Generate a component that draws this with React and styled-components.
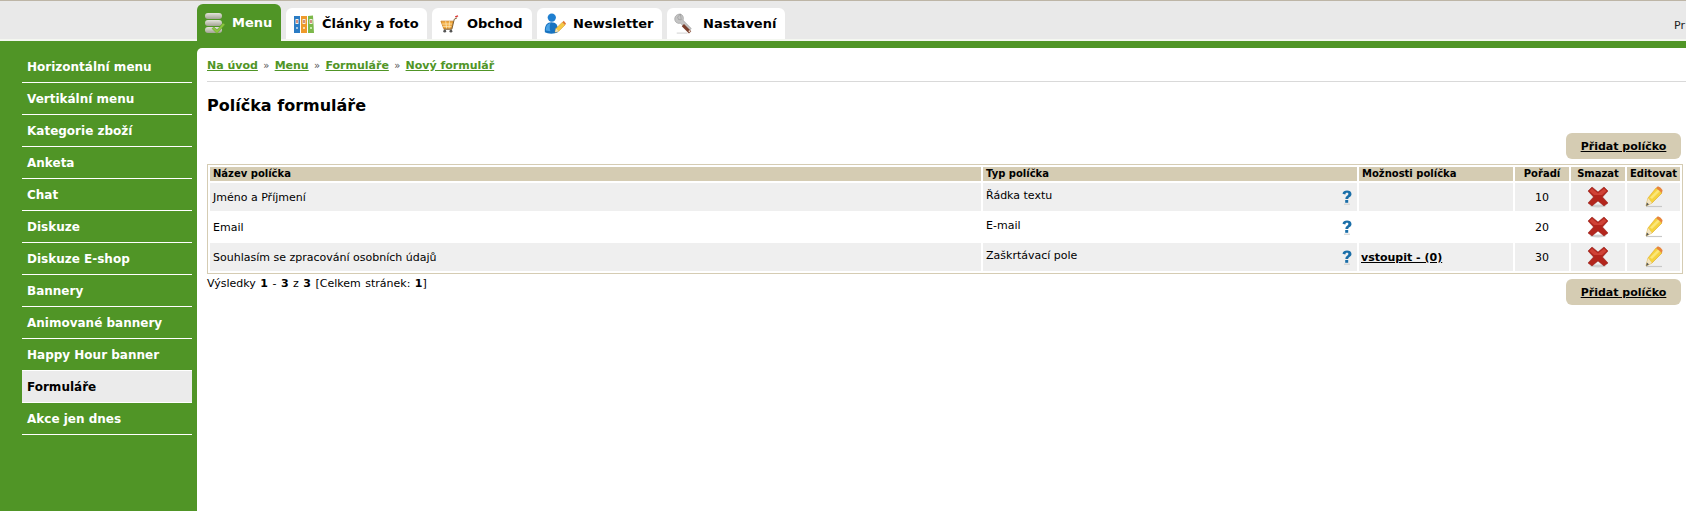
import React from 'react';
import styled, { createGlobalStyle } from 'styled-components';

const GlobalStyle = createGlobalStyle`
  html, body {
    margin: 0;
    padding: 0;
    height: 100%;
    overflow: hidden;
    background: #fff;
    font-family: "DejaVu Sans", Verdana, sans-serif;
    font-size: 11px;
    color: #000;
  }
`;

const Page = styled.div`
  width: 1686px;
  height: 511px;
  display: flex;
  flex-direction: column;
  overflow: hidden;
`;

const TopBar = styled.div`
  height: 41px;
  flex: none;
  border-top: 1px solid #bdb5a6;
  background: linear-gradient(#e9e9e9 0 38px, #f4f7f0 38px);
  display: flex;
  align-items: flex-start;
  padding: 3px 0 0 197px;
  gap: 5px;
  box-sizing: border-box;
`;

const Tab = styled.a`
  display: flex;
  align-items: center;
  box-sizing: border-box;
  height: ${p => (p.$active ? '37px' : '31px')};
  margin-top: ${p => (p.$active ? '0' : '4px')};
  width: ${p => p.$w}px;
  padding-left: ${p => p.$pad}px;
  gap: ${p => p.$gap}px;
  border-radius: 6px 6px 0 0;
  background: ${p => (p.$active ? '#509526' : '#fff')};
  color: ${p => (p.$active ? '#fff' : '#000')};
  font-size: 13px;
  font-weight: bold;
  white-space: nowrap;
`;

const UserInfo = styled.div`
  margin-left: auto;
  width: 12px;
  margin-top: 15px;
  font-size: 11px;
  color: #222;
  overflow: hidden;
  white-space: nowrap;
`;

const Main = styled.div`
  flex: 1;
  display: flex;
  background: #509526;
  padding-top: 7px;
`;

const Sidebar = styled.nav`
  width: 197px;
  flex: none;
  box-sizing: border-box;
  padding: 10px 5px 0 22px;
  margin-top: -7px;
`;

const SideItem = styled.a`
  display: flex;
  align-items: center;
  box-sizing: border-box;
  height: 32px;
  padding-left: 5px;
  padding-top: 1px;
  font-size: 12px;
  font-weight: bold;
  border-bottom: 1px solid #fff;
  color: ${p => (p.$active ? '#000' : '#fff')};
  background: ${p => (p.$active ? '#ebebeb' : 'transparent')};
`;

const Content = styled.main`
  flex: 1;
  min-width: 0;
  background: #fff;
  border-top-left-radius: 5px;
  padding: 0 5px 0 10px;
`;

const Crumbs = styled.div`
  height: 34px;
  box-sizing: border-box;
  margin-right: -5px;
  padding-top: 11px;
  border-bottom: 1px solid #d9d9d9;
  font-size: 11px;
  font-weight: bold;
  color: #555;
  display: flex;
  gap: 5.3px;
`;

const Crumb = styled.a`
  color: #509526;
  text-decoration: underline;
`;

const Sep = styled.span`
  font-weight: normal;
  font-size: 10px;
  margin-top: 1px;
`;

const Title = styled.h1`
  margin: 14px 0 0;
  font-size: 16px;
  line-height: 20px;
  font-weight: bold;
`;

const ButtonRow = styled.div`
  display: flex;
  justify-content: flex-end;
  margin-top: 17px;
`;

const Button = styled.a`
  width: 115px;
  height: 26px;
  display: flex;
  align-items: center;
  justify-content: center;
  background: #d5ccb3;
  border-radius: 6px;
  color: #000;
  font-size: 11px;
  font-weight: bold;
  text-decoration: underline;
`;

const Table = styled.table`
  width: 1476px;
  margin-top: 5px;
  table-layout: fixed;
  border-collapse: separate;
  border-spacing: 2px;
  border: 1px solid #d5ccb3;
`;

const Th = styled.th`
  height: 14px;
  padding: 0 0 0 ${p => (p.$center ? 0 : 3)}px;
  background: #d5ccb3;
  font-size: 10px;
  line-height: 14px;
  font-weight: bold;
  text-align: ${p => (p.$center ? 'center' : 'left')};
  white-space: nowrap;
  overflow: hidden;
`;

const Row = styled.tr`
  background: ${p => (p.$odd ? '#efefef' : '#fff')};
`;

const Td = styled.td`
  height: 28px;
  padding: 0 0 0 ${p => (p.$center ? 0 : 3)}px;
  font-size: 11px;
  text-align: ${p => (p.$center ? 'center' : 'left')};
  white-space: nowrap;
`;

const TypeCell = styled.div`
  display: flex;
  justify-content: space-between;
  align-items: center;
  padding-right: 5px;
  height: 28px;
`;

const TypeText = styled.span`
  margin-top: -4px;
`;

const EnterLink = styled.a`
  margin-left: -1px;
  font-weight: bold;
  text-decoration: underline;
`;

const Footer = styled.div`
  display: flex;
  justify-content: space-between;
  align-items: flex-start;
`;

const Results = styled.div`
  font-size: 11px;
  line-height: 14px;
  margin-top: 3px;
  word-spacing: 1px;
`;

const FooterButton = styled(Button)`
  margin-top: 5px;
`;

const IconSlot = styled.span`
  display: inline-flex;
  vertical-align: middle;
`;

const MenuIcon = () => (
  <svg width="22" height="22" viewBox="0 0 22 22">
    <defs>
      <linearGradient id="disk" x1="0" y1="0" x2="0" y2="1">
        <stop offset="0" stopColor="#e4e4dc" />
        <stop offset="1" stopColor="#a3a394" />
      </linearGradient>
    </defs>
    <rect x="1" y="1" width="17" height="6" rx="3" fill="url(#disk)" />
    <rect x="1" y="8" width="17" height="6" rx="3" fill="url(#disk)" />
    <rect x="1" y="15" width="17" height="6" rx="3" fill="url(#disk)" />
    <path d="M10 15l3 3 6-7 2 1.500-8 9-5-5z" fill="#8dc63f" stroke="#5d9a2a" strokeWidth=".5" />
  </svg>
);

const FoldersIcon = () => (
  <svg width="20" height="20" viewBox="0 0 20 20">
    <rect x="0" y="2" width="6" height="17" fill="#2b7cc4" />
    <rect x="7" y="2" width="6" height="17" fill="#ee9a2b" />
    <path d="M14 2l5-.5L20 19h-6z" fill="#7cb84a" />
    <rect x="1.500" y="5" width="3" height="5" fill="#f4f0e4" />
    <rect x="8.500" y="5" width="3" height="5" fill="#f4f0e4" />
    <rect x="15.500" y="5" width="3" height="5" fill="#f4f0e4" />
    <path d="M3 6v3M10 6v3M17 6v3" stroke="#b03020" strokeWidth="1" />
    <circle cx="3" cy="14" r="1" fill="#cde" />
    <circle cx="10" cy="14" r="1" fill="#fed" />
    <circle cx="17" cy="14" r="1" fill="#dfc" />
  </svg>
);

const CartIcon = () => (
  <svg width="19" height="20" viewBox="0 0 20 20">
    <path d="M1 7h13l-2 8H4z" fill="#f2a93b" stroke="#c97a1a" strokeWidth=".8" />
    <path d="M2 10h11M3 12.500h9M6 7l1 8M10 7l-.5 8" stroke="#fff0c8" strokeWidth=".7" />
    <path d="M4 15.500h8.500L15 5l3-1.500" fill="none" stroke="#7a5a2a" strokeWidth="1" />
    <path d="M16 2.500l3-1" stroke="#d33" strokeWidth="1.400" />
    <circle cx="5" cy="17.500" r="1.500" fill="#555" />
    <circle cx="11.500" cy="17.500" r="1.500" fill="#555" />
  </svg>
);

const NewsIcon = () => (
  <svg width="22" height="24" viewBox="0 0 24 24">
    <circle cx="8.500" cy="5" r="4.500" fill="#1f7fd0" />
    <path d="M1 21c-1-8 3-11 7-11 5 0 8 3 7 11-3 2-11 2-14 0z" fill="#1873c0" />
    <path d="M2 19c0-5 2-7 5-8-1 3-1 6 0 9z" fill="#4aa3e6" />
    <path d="M12 21l1-4 7-7 3 3-7 7z" fill="#f6c945" stroke="#c98a1a" strokeWidth=".5" />
    <path d="M20 10l1.500-1.500 2.500 3L23 13z" fill="#e2762c" />
    <path d="M12 21l1-4 3 3z" fill="#f3e2bf" />
  </svg>
);

const WrenchIcon = () => (
  <svg width="20" height="22" viewBox="0 0 22 24">
    <path d="M7 1C3 1 0 4 1 8c1 3 4 4 6 3l9 9 3-3-9-9c1-3 0-6-3-7L4 4.500 5 7l3 .5z" fill="#c4c4c4" stroke="#8f8f8f" strokeWidth=".6" />
    <path d="M11 12l8 8-2.500 2.500-8-8z" fill="#7a3e2c" />
    <circle cx="17" cy="20" r="1" fill="#e8d8c8" />
    <path d="M3 22h12" stroke="#ccc" strokeWidth="1" />
  </svg>
);

const HelpIcon = () => (
  <svg width="10" height="15" viewBox="0 0 10 15">
    <path d="M.5 3.800C.8 1.500 2.800.5 5 .5c2.500 0 4.500 1.200 4.500 3.400 0 3-3.300 3-3.300 5.100H3.400c0-3.200 3-3.300 3-5 0-.8-.6-1.200-1.500-1.200S3.500 3.300 3.300 4.400z" fill="#1a6ea8" />
    <rect x="3.200" y="10" width="3" height="2.800" fill="#1a6ea8" />
    <path d="M2 14.200h6" stroke="#ccc" strokeWidth="1" />
  </svg>
);

const DeleteIcon = () => (
  <svg width="22" height="22" viewBox="0 0 22 22">
    <ellipse cx="11" cy="20" rx="8" ry="1.500" fill="#cfcfcf" />
    <path d="M1 5l4-4 6 5 6-5 4 4-5.500 6 5.500 6-4 3-6-5-6 5-4-3 5.500-6z" fill="#b3251c" stroke="#8e1a14" strokeWidth=".5" />
    <path d="M2.500 5L5 2.500 11 7.500l6-5L19.500 5 15 9 11 9 7 9z" fill="#cf4236" />
  </svg>
);

const EditIcon = () => (
  <svg width="20" height="22" viewBox="0 0 20 22">
    <path d="M2 20.500h16" stroke="#c8c8c8" strokeWidth="1.200" />
    <path d="M2 20l2-8L12 2l6 5L8 17z" fill="#f5d33f" stroke="#dca822" strokeWidth=".6" />
    <path d="M6 11.500L14 3.500l2 1.500-8 8z" fill="#fbe678" />
    <path d="M12 2l1.500-1.500c1.500-.5 4.500 2 5 4L18 7z" fill="#e8843a" />
    <path d="M2 20l2-8 4 5z" fill="#f2e3c2" />
    <path d="M2 20l.9-3.500 2.100 2z" fill="#555" />
  </svg>
);

const tabs = [
  { label: 'Menu', icon: <MenuIcon />, w: 84, pad: 7, gap: 6, active: true },
  { label: 'Články a foto', icon: <FoldersIcon />, w: 141, pad: 8, gap: 8 },
  { label: 'Obchod', icon: <CartIcon />, w: 100, pad: 8, gap: 8 },
  { label: 'Newsletter', icon: <NewsIcon />, w: 125, pad: 7, gap: 7 },
  { label: 'Nastavení', icon: <WrenchIcon />, w: 118, pad: 7, gap: 9 },
];

const sideItems = [
  'Horizontální menu',
  'Vertikální menu',
  'Kategorie zboží',
  'Anketa',
  'Chat',
  'Diskuze',
  'Diskuze E-shop',
  'Bannery',
  'Animované bannery',
  'Happy Hour banner',
  'Formuláře',
  'Akce jen dnes',
];

const rows = [
  { name: 'Jméno a Příjmení', type: 'Řádka textu', order: 10 },
  { name: 'Email', type: 'E-mail', order: 20 },
  { name: 'Souhlasím se zpracování osobních údajů', type: 'Zaškrtávací pole', order: 30, link: 'vstoupit - (0)' },
];

export default function App() {
  return (
    <Page>
      <GlobalStyle />
      <TopBar>
        {tabs.map(t => (
          <Tab key={t.label} $active={t.active} $w={t.w} $pad={t.pad} $gap={t.gap}>
            <IconSlot>{t.icon}</IconSlot>
            {t.label}
          </Tab>
        ))}
        <UserInfo>Pr</UserInfo>
      </TopBar>
      <Main>
        <Sidebar>
          {sideItems.map(item => (
            <SideItem key={item} $active={item === 'Formuláře'}>{item}</SideItem>
          ))}
        </Sidebar>
        <Content>
          <Crumbs>
            <Crumb>Na úvod</Crumb><Sep>»</Sep>
            <Crumb>Menu</Crumb><Sep>»</Sep>
            <Crumb>Formuláře</Crumb><Sep>»</Sep>
            <Crumb>Nový formulář</Crumb>
          </Crumbs>
          <Title>Políčka formuláře</Title>
          <ButtonRow><Button>Přidat políčko</Button></ButtonRow>
          <Table>
            <colgroup>
              <col style={{ width: 771 }} />
              <col style={{ width: 374 }} />
              <col style={{ width: 154 }} />
              <col style={{ width: 54 }} />
              <col style={{ width: 54 }} />
              <col style={{ width: 53 }} />
            </colgroup>
            <thead>
              <tr>
                <Th>Název políčka</Th>
                <Th>Typ políčka</Th>
                <Th>Možnosti políčka</Th>
                <Th $center>Pořadí</Th>
                <Th $center>Smazat</Th>
                <Th $center>Editovat</Th>
              </tr>
            </thead>
            <tbody>
              {rows.map((r, i) => (
                <Row key={r.name} $odd={i % 2 === 0}>
                  <Td>{r.name}</Td>
                  <Td>
                    <TypeCell>
                      <TypeText>{r.type}</TypeText>
                      <IconSlot><HelpIcon /></IconSlot>
                    </TypeCell>
                  </Td>
                  <Td>{r.link && <EnterLink>{r.link}</EnterLink>}</Td>
                  <Td $center>{r.order}</Td>
                  <Td $center><IconSlot><DeleteIcon /></IconSlot></Td>
                  <Td $center><IconSlot><EditIcon /></IconSlot></Td>
                </Row>
              ))}
            </tbody>
          </Table>
          <Footer>
            <Results>Výsledky <b>1</b> - <b>3</b> z <b>3</b> [Celkem stránek: <b>1</b>]</Results>
            <FooterButton>Přidat políčko</FooterButton>
          </Footer>
        </Content>
      </Main>
    </Page>
  );
}
